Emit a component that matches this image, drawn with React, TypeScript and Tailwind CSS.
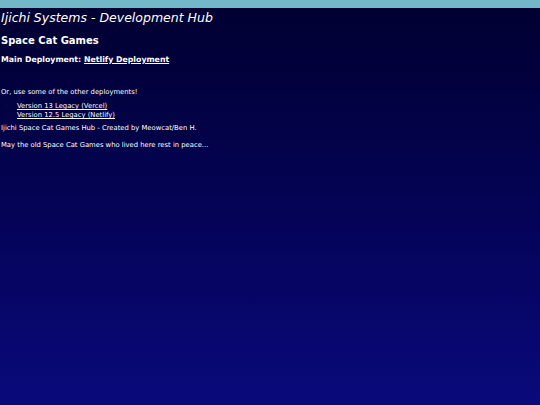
const font = { fontFamily: '"DejaVu Sans", Verdana, sans-serif' };

const App = () => {
    return (
        <div className="min-h-screen bg-linear-to-b from-[#010030] to-[#0a0a7c] text-white" style={font}>
            <div className="h-2 bg-[#72b8c9]" />
            <div className="px-px">
                <h1 className="text-[12.5px] italic leading-[15px] mt-[2px]">Ijichi Systems - Development Hub</h1>
                <h2 className="text-[10px] font-bold leading-[12px] mt-[10px]">Space Cat Games</h2>
                <h3 className="text-[7.8px] font-bold leading-[10px] mt-[8px]">
                    Main Deployment:{" "}
                    <a href="#" className="underline">Netlify Deployment</a>
                </h3>

                <p className="text-[6.8px] leading-[8px] mt-[23px]">Or, use some of the other deployments!</p>
                <ul className="text-[6.8px] leading-[9px] pl-4 mt-[6px] list-disc marker:text-[#0a0a3a]">
                    <li><a href="#" className="underline">Version 13 Legacy (Vercel)</a></li>
                    <li><a href="#" className="underline">Version 12.5 Legacy (Netlify)</a></li>
                </ul>
                <p className="text-[6.8px] leading-[8px] mt-[4px]">Ijichi Space Cat Games Hub - Created by Meowcat/Ben H.</p>
                <p className="text-[6.8px] leading-[8px] mt-[9px]">May the old Space Cat Games who lived here rest in peace...</p>
            </div>
        </div>
    );
};
export default App;
